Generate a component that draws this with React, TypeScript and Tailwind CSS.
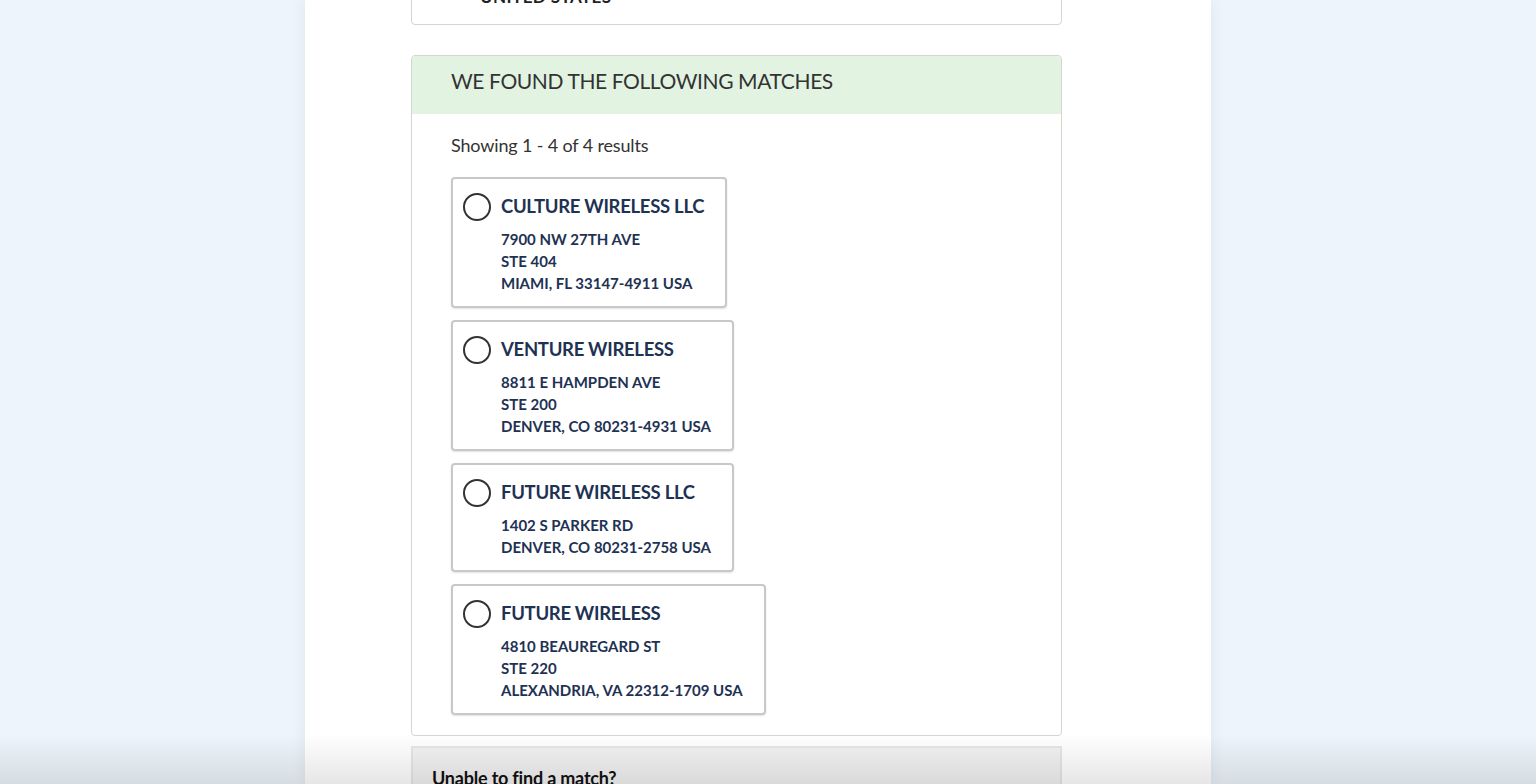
const matches = [
  {
    name: 'CULTURE WIRELESS LLC',
    lines: ['7900 NW 27TH AVE', 'STE 404', 'MIAMI, FL 33147-4911 USA'],
  },
  {
    name: 'VENTURE WIRELESS',
    lines: ['8811 E HAMPDEN AVE', 'STE 200', 'DENVER, CO 80231-4931 USA'],
  },
  {
    name: 'FUTURE WIRELESS LLC',
    lines: ['1402 S PARKER RD', 'DENVER, CO 80231-2758 USA'],
  },
  {
    name: 'FUTURE WIRELESS',
    lines: ['4810 BEAUREGARD ST', 'STE 220', 'ALEXANDRIA, VA 22312-1709 USA'],
  },
];

const font = { fontFamily: 'Lato, "Noto Sans", sans-serif' };

const App = () => {
  return (
    <div className="relative h-[784px] overflow-hidden bg-[#edf4fb]" style={font}>
      <div className="ml-[305px] w-[906px] h-full overflow-hidden bg-white shadow-[0_0_14px_rgba(40,60,90,0.08)]">
        <div className="ml-[106px] w-[651px]">
          {/* address entered above (scrolled off) */}
          <div className="-mt-[60px] h-[85px] border border-[#d6d6d0] rounded-[4px] flex items-end pl-[68px] pb-[19px]">
            <span className="text-[17px] font-bold leading-none text-[#222] tracking-wide">UNITED STATES</span>
          </div>

          {/* matches */}
          <div className="mt-[30px] border border-[#d6d6d0] rounded-[4px] overflow-hidden">
            <div className="h-[58px] bg-[#e2f3e2] flex items-center pl-[39px] pb-[9px]">
              <h2 className="text-[21px] leading-none text-[#333] tracking-[-0.4px]">WE FOUND THE FOLLOWING MATCHES</h2>
            </div>
            <div className="px-[39px] pt-[19px] pb-[20px]">
              <p className="text-[18px] leading-[24px] text-[#333] tracking-[-0.15px]">Showing 1 - 4 of 4 results</p>
              <div className="mt-[20px] flex flex-col items-start gap-[12px]">
                {matches.map((m) => (
                  <label
                    key={m.name}
                    className="flex gap-[10px] border-2 border-[#c8c8c8] rounded-[4px] pl-[10px] pr-[21px] pt-[15px] pb-[12px] shadow-[0_1px_2px_rgba(0,0,0,0.12)] cursor-pointer"
                  >
                    <span className="-mt-px w-[28px] h-[28px] rounded-full border-2 border-[#333] shrink-0" />
                    <span className="flex flex-col text-[#1e3253]">
                      <span className="text-[18.5px] leading-[24px] font-bold tracking-[-0.3px]">{m.name}</span>
                      <span className="mt-[10px] flex flex-col text-[15px] leading-[22px] font-bold">
                        {m.lines.map((l) => (
                          <span key={l}>{l}</span>
                        ))}
                      </span>
                    </span>
                  </label>
                ))}
              </div>
            </div>
          </div>

          {/* no match */}
          <div className="mt-[10px] border-2 border-[#e6e6e6] bg-[#f2f2f2] px-[19px] pt-[18px] h-[120px]">
            <p className="text-[18px] font-bold leading-[24px] text-[#111] tracking-[-0.2px]">Unable to find a match?</p>
          </div>
        </div>
      </div>

      {/* bottom fade */}
      <div className="pointer-events-none absolute inset-x-0 bottom-0 h-[50px] bg-gradient-to-b from-transparent to-black/10" />
    </div>
  );
};

export default App;
